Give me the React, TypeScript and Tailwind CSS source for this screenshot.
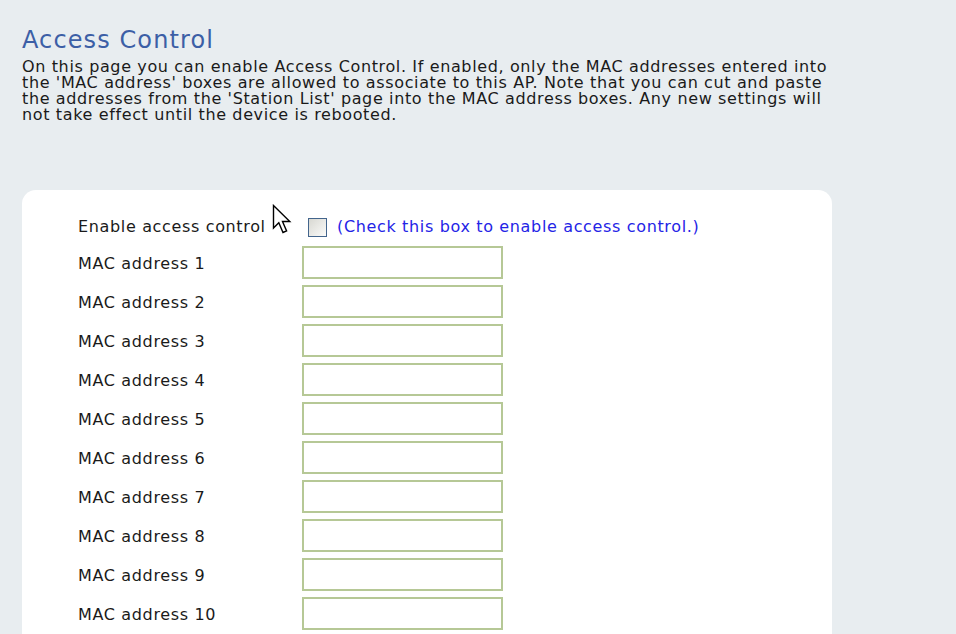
import React from "react";

const macRows = Array.from({ length: 10 }, (_, i) => i + 1);

const Pointer = () => (
  <svg
    className="pointer-events-none absolute left-[272px] top-[204px]"
    width="21"
    height="31"
    viewBox="0 0 21 31"
  >
    <path
      d="M1.5 1.5 L1.5 24 L6.8 18.8 L11 28.5 L14.6 27 L10.5 17.5 L17.8 17.5 Z"
      fill="#ffffff"
      stroke="#000000"
      strokeWidth="1.4"
      strokeLinejoin="miter"
    />
  </svg>
);

const App = () => {
  return (
    <div
      className="relative h-[634px] w-[956px] overflow-hidden bg-[#e8edf0] text-[#1a1a1a]"
      style={{ fontFamily: '"DejaVu Sans", Verdana, sans-serif' }}
    >
      <div className="px-[22px] pt-[28px]">
        <h1 className="text-[24px] leading-[24px] tracking-[1.1px] text-[#3c5fa6]">Access Control</h1>
        <p className="mt-[7px] w-[880px] text-[16px] leading-[16px] tracking-[0.63px]">
          On this page you can enable Access Control. If enabled, only the MAC addresses entered into
          <br />
          the 'MAC address' boxes are allowed to associate to this AP. Note that you can cut and paste
          <br />
          the addresses from the 'Station List' page into the MAC address boxes. Any new settings will
          <br />
          not take effect until the device is rebooted.
        </p>
      </div>

      <div className="ml-[22px] mt-[67px] w-[810px] rounded-t-[14px] bg-white pb-10 pl-[56px] pt-[22px] text-[16px] tracking-[0.65px]">
        <div className="flex h-[30px] items-center">
          <span className="w-[224px]">Enable access control</span>
          <span className="ml-[6px] h-[19px] w-[19px] border border-[#43658c] bg-gradient-to-br from-[#d8d8d2] to-[#fbfbf9]" />
          <span className="ml-[10px] text-[#2424e6]">(Check this box to enable access control.)</span>
        </div>
        <div className="mt-[4px] flex flex-col gap-[6px]">
          {macRows.map((n) => (
            <div key={n} className="flex h-[33px] items-center">
              <span className="w-[224px] pt-[2px]">MAC address {n}</span>
              <input
                type="text"
                className="h-[33px] w-[201px] border-2 border-[#b6c896] bg-white outline-none"
              />
            </div>
          ))}
        </div>
      </div>

      <Pointer />
    </div>
  );
};

export default App;
